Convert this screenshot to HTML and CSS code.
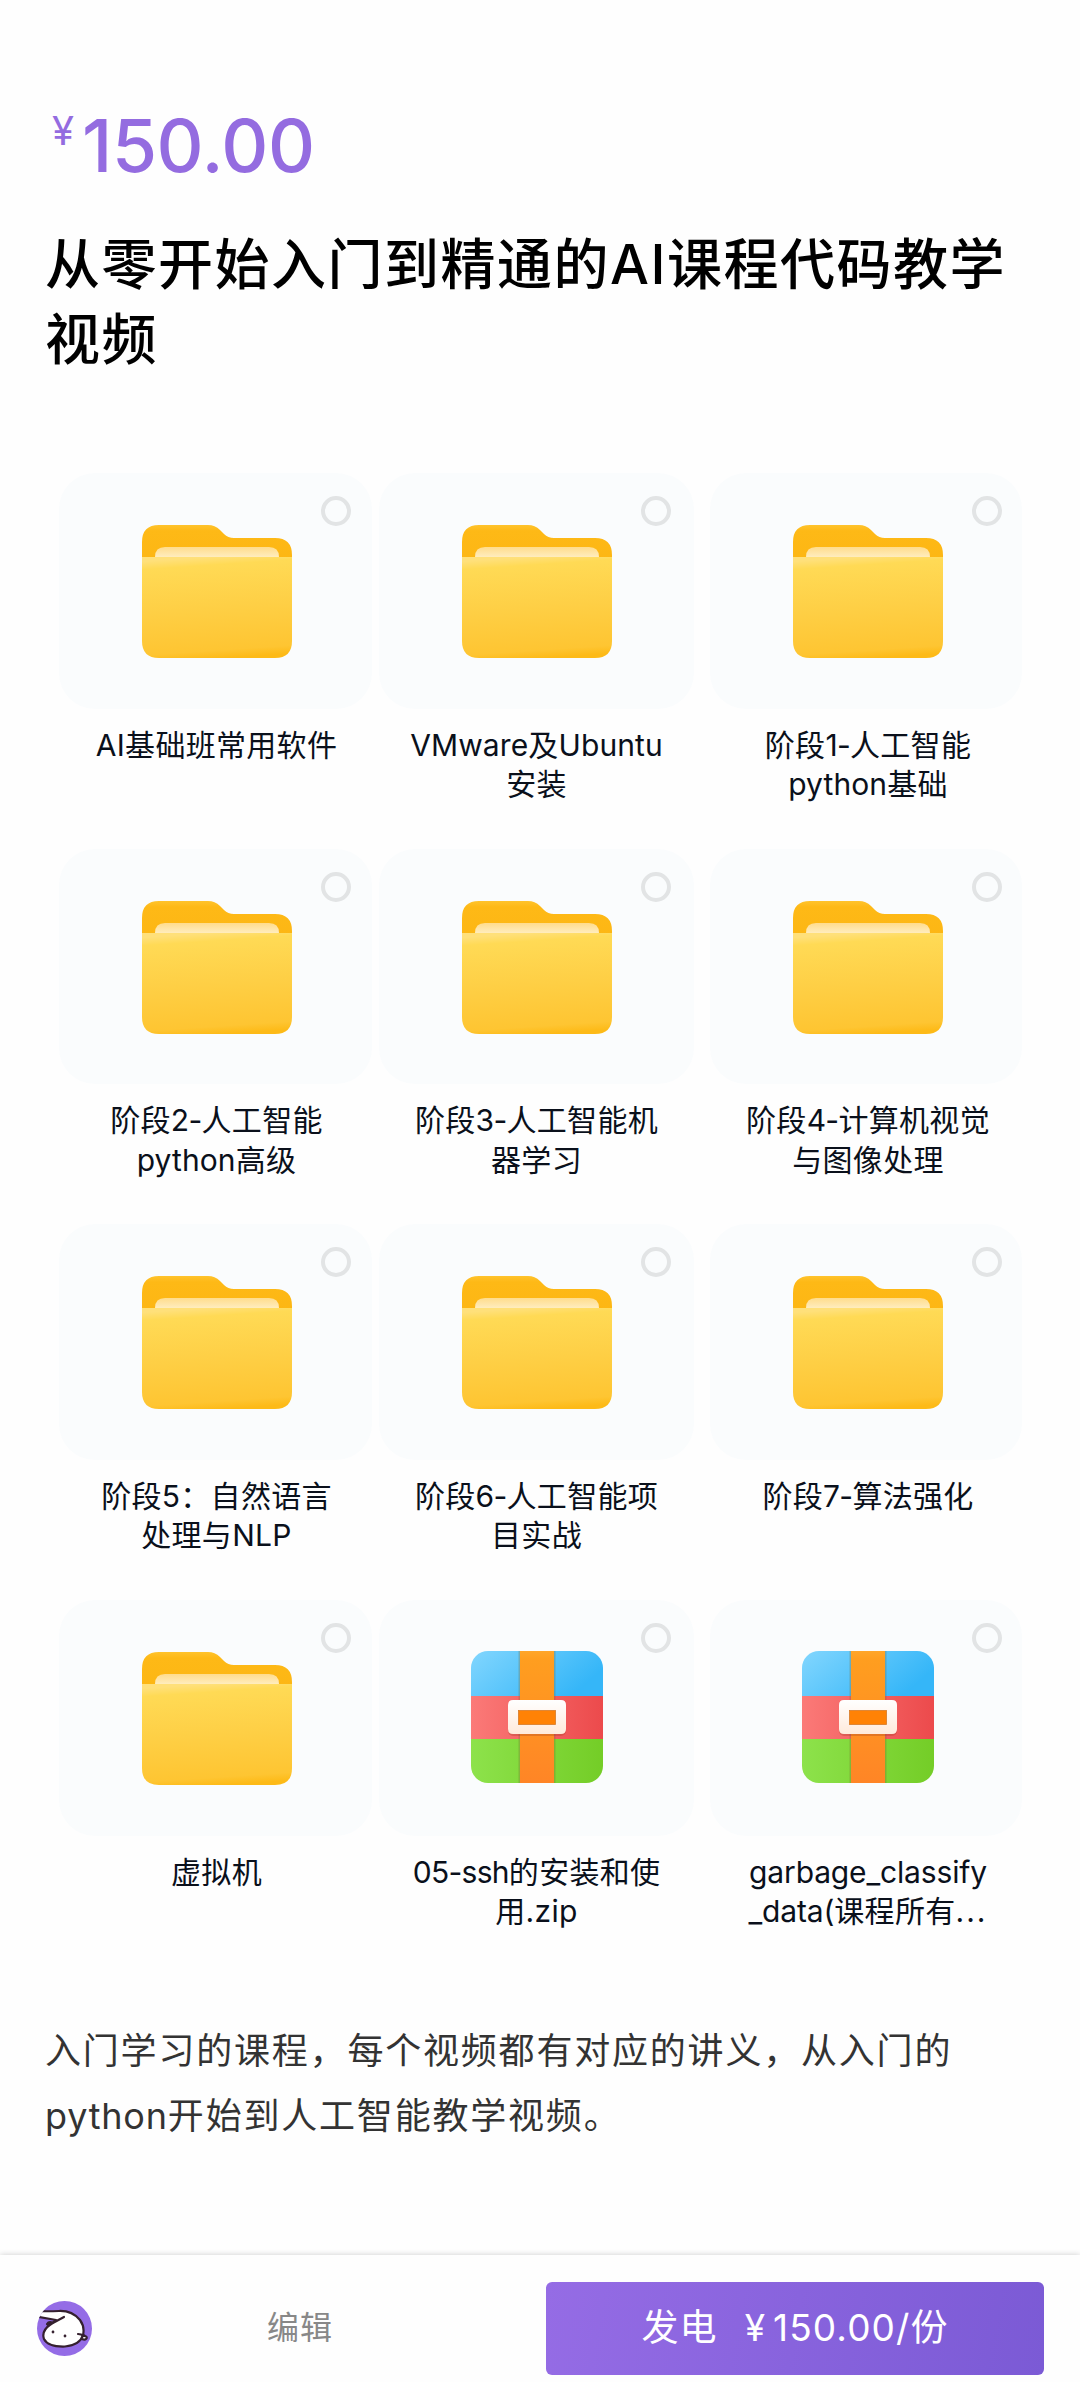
FILE: index.html
```html
<!DOCTYPE html>
<html lang="zh-CN">
<head>
<meta charset="utf-8">
<title>从零开始入门到精通的AI课程代码教学视频</title>
<link rel="stylesheet" href="styles.css">
</head>
<body>
<svg class="defs" width="0" height="0" aria-hidden="true">
  <defs>
    <linearGradient id="back" x1="0" y1="0" x2="0" y2="1"><stop offset="0" stop-color="#ffc32c"/><stop offset=".12" stop-color="#feb916"/><stop offset="1" stop-color="#fcb513"/></linearGradient>
    <linearGradient id="paper" x1="0" y1="0" x2="0" y2="1"><stop offset="0" stop-color="#ffdc8c"/><stop offset="1" stop-color="#fff0c8"/></linearGradient>
    <linearGradient id="front" x1=".45" y1="0" x2=".55" y2="1"><stop offset="0" stop-color="#ffe07a"/><stop offset=".08" stop-color="#ffda55"/><stop offset=".5" stop-color="#fecf45"/><stop offset=".92" stop-color="#fec532"/><stop offset="1" stop-color="#fdba17"/></linearGradient>
    <linearGradient id="blue" x1="0" y1="0" x2="1" y2=".4"><stop offset="0" stop-color="#82d6fe"/><stop offset="1" stop-color="#35b6f8"/></linearGradient>
    <linearGradient id="red"><stop offset="0" stop-color="#fb7a78"/><stop offset="1" stop-color="#ec4a4c"/></linearGradient>
    <linearGradient id="green"><stop offset="0" stop-color="#8de24b"/><stop offset="1" stop-color="#74cd27"/></linearGradient>
    <linearGradient id="strap" x1="0" y1="0" x2="0" y2="1"><stop offset="0" stop-color="#ffa629"/><stop offset=".06" stop-color="#ff9e1f"/><stop offset="1" stop-color="#ff8526"/></linearGradient>
    <linearGradient id="buckle" x1="0" y1="0" x2="0" y2="1"><stop offset="0" stop-color="#fff"/><stop offset="1" stop-color="#ffeadb"/></linearGradient>
    <clipPath id="zipClip"><rect width="132" height="132" rx="17"/></clipPath>
    <clipPath id="avatarClip"><circle cx="27.5" cy="27.5" r="27.5"/></clipPath>
    <symbol id="folder" viewBox="0 0 150 133">
      <path d="M0 50V17Q0 0 17 0H66Q73 0 78 5L82 9Q86 13 92 13H133Q150 13 150 30V50Z" fill="url(#back)"/>
      <path d="M13 34V32Q13 22 23 22H127Q137 22 137 32V34Z" fill="url(#paper)"/>
      <path d="M0 32H150V116Q150 133 133 133H17Q0 133 0 116Z" fill="url(#front)"/>
    </symbol>
    <symbol id="zip" viewBox="0 0 132 132">
      <g clip-path="url(#zipClip)">
        <rect width="132" height="45" fill="url(#blue)"/>
        <rect y="45" width="132" height="43" fill="url(#red)"/>
        <rect y="88" width="132" height="44" fill="url(#green)"/>
        <rect x="47.500" width="37" height="132" fill="#776633" opacity=".3"/>
        <rect x="49" width="34" height="132" fill="url(#strap)"/>
      </g>
      <rect x="37" y="50" width="58" height="35" rx="5" fill="#a33d22" opacity=".3"/>
      <path d="M42 49H90Q95 49 95 54V78Q95 83 90 83H42Q37 83 37 78V54Q37 49 42 49Z" fill="url(#buckle)"/>
      <rect x="47.500" y="59.500" width="37" height="14" fill="#ff8205" stroke="#d67b27" stroke-width=".8"/>
    </symbol>
  </defs>
</svg>

<main class="page">
  <div class="price"><span class="price-sign">¥</span><span class="price-value">150.00</span></div>
  <h1 class="title">从零开始入门到精通的AI课程代码教学视频</h1>

  <ul class="files">
    <li class="file"><div class="tile"><svg class="folder"><use href="#folder"/></svg><i class="pick"></i></div><p class="name">AI基础班常用软件</p></li>
    <li class="file"><div class="tile"><svg class="folder"><use href="#folder"/></svg><i class="pick"></i></div><p class="name"><span class="wide">VMware</span>及<span class="wide">Ubuntu</span><br>安装</p></li>
    <li class="file"><div class="tile"><svg class="folder"><use href="#folder"/></svg><i class="pick"></i></div><p class="name">阶段<span class="tight">1-</span>人工智能<br><span class="wide">python</span>基础</p></li>

    <li class="file"><div class="tile"><svg class="folder"><use href="#folder"/></svg><i class="pick"></i></div><p class="name">阶段<span class="tight">2-</span>人工智能<br><span class="wide">python</span>高级</p></li>
    <li class="file"><div class="tile"><svg class="folder"><use href="#folder"/></svg><i class="pick"></i></div><p class="name">阶段<span class="tight">3-</span>人工智能机<br>器学习</p></li>
    <li class="file"><div class="tile"><svg class="folder"><use href="#folder"/></svg><i class="pick"></i></div><p class="name">阶段<span class="tight">4-</span>计算机视觉<br>与图像处理</p></li>

    <li class="file"><div class="tile"><svg class="folder"><use href="#folder"/></svg><i class="pick"></i></div><p class="name">阶段5：自然语言<br>处理与NLP</p></li>
    <li class="file"><div class="tile"><svg class="folder"><use href="#folder"/></svg><i class="pick"></i></div><p class="name">阶段<span class="tight">6-</span>人工智能项<br>目实战</p></li>
    <li class="file"><div class="tile"><svg class="folder"><use href="#folder"/></svg><i class="pick"></i></div><p class="name">阶段<span class="tight">7-</span>算法强化</p></li>

    <li class="file"><div class="tile"><svg class="folder"><use href="#folder"/></svg><i class="pick"></i></div><p class="name">虚拟机</p></li>
    <li class="file"><div class="tile"><svg class="zip"><use href="#zip"/></svg><i class="pick"></i></div><p class="name"><span class="tight">05-ssh</span>的安装和使<br>用.zip</p></li>
    <li class="file"><div class="tile"><svg class="zip"><use href="#zip"/></svg><i class="pick"></i></div><p class="name"><span class="long">garbage_classify</span><br><span class="long">_data(</span>课程所有<span class="dots">...</span></p></li>
  </ul>

  <p class="intro">入门学习的课程，每个视频都有对应的讲义，从入门的<br><span class="word">python</span>开始到人工智能教学视频。</p>
</main>

<footer class="bar">
  <svg class="avatar" viewBox="0 0 55 55">
    <circle cx="27.500" cy="27.500" r="27.500" fill="#946ce6"/>
    <g clip-path="url(#avatarClip)" stroke="#35202f" stroke-width="2.200" stroke-linecap="round" stroke-linejoin="round">
      <path d="M10 23Q12 20 16 22L14 26Z" fill="#35202f"/>
      <path d="M41 33Q44 32 48 35Q51 36 49 38Q47 40 41 36" fill="#fff"/>
      <path d="M-3 10Q10 10.500 22 10Q35 9.500 43 19Q48 26 46 34Q43 44 28 45.500Q11 46 7 38Q4 30 14 23L19 19L-3 15Z" fill="#fff"/>
      <path d="M14 23L27 16M41 33Q44 33 47 35" fill="none"/>
      <circle cx="16" cy="31" r=".6" fill="#35202f" stroke-width="1.600"/>
      <circle cx="28" cy="35" r=".6" fill="#35202f" stroke-width="1.600"/>
    </g>
  </svg>
  <a class="edit">编辑</a>
  <button class="buy"><span>发电</span><span class="buy-sign">¥</span><span>150.00/</span><span>份</span></button>
</footer>
</body>
</html>
```
FILE: styles.css
```css
* { box-sizing: border-box; margin: 0; padding: 0; }

body {
  width: 1080px;
  height: 2382px;
  display: flex;
  flex-direction: column;
  background: #fefefe;
  color: #000;
  font-family: Inter, "Noto Sans CJK SC", sans-serif;
  overflow: hidden;
}

.defs { position: absolute; }

.page { flex: 1; padding: 100px 45px 0; }

/* Price and title */
.price {
  display: flex;
  align-items: flex-start;
  height: 91px;
  padding-left: 7px;
  color: #946ce0;
}
.price-sign { width: 30px; font-size: 40px; line-height: 61px; }
.price-value { font-size: 73px; line-height: 91px; font-weight: 500; letter-spacing: -.4px; }

.title {
  margin-top: 36px;
  font-size: 55px;
  font-weight: 500;
  line-height: 75px;
  letter-spacing: 1.500px;
}

/* File grid */
.files {
  display: grid;
  grid-template-columns: 320px 331px 312px;
  grid-auto-rows: 375.700px;
  margin: 96px 0 0 14px;
  list-style: none;
}
.file { width: 313px; }
.file:nth-child(3n+2) { width: 315px; }
.file:nth-child(3n) { width: 312px; }

.tile {
  position: relative;
  height: 235.500px;
  padding: 52px 0 0 83px;
  border-radius: 36px;
  background: #fafcfd;
}
.folder { display: block; width: 150px; height: 133px; }
.zip { display: block; width: 132px; height: 132px; margin: -1px 0 0 9px; }
.pick {
  position: absolute;
  top: 23px;
  left: 262px;
  width: 30px;
  height: 30px;
  border: 4px solid #e2e4e5;
  border-radius: 50%;
}

.name {
  width: 315px;
  margin-top: 17px;
  color: #0a101b;
  font-size: 30px;
  line-height: 39.500px;
  letter-spacing: .3px;
  text-align: center;
  white-space: nowrap;
}
.file:nth-child(3n) .name { width: 316px; }
.wide { letter-spacing: .1px; }
.tight { letter-spacing: -.7px; }
.long { letter-spacing: -.15px; }
.dots { letter-spacing: 2px; }

.intro {
  margin-top: 43px;
  color: #333;
  font-size: 36px;
  line-height: 65px;
  letter-spacing: 1.800px;
  white-space: nowrap;
}
.word { letter-spacing: .8px; }

/* Bottom bar */
.bar {
  display: flex;
  align-items: flex-start;
  height: 127px;
  padding: 27px 36px 0;
  background: #fefefe;
  box-shadow: 0 0 6px rgba(0, 0, 0, .2);
}
.avatar { width: 55px; height: 55px; margin: 19px 0 0 1px; }
.edit {
  width: 64px;
  margin-left: 175px;
  color: #888;
  font-size: 32px;
  line-height: 92px;
  letter-spacing: 1px;
  white-space: nowrap;
}
.buy {
  display: flex;
  justify-content: center;
  width: 498px;
  height: 93px;
  margin-left: 215px;
  border: 0;
  border-radius: 6px;
  background: linear-gradient(100deg, #956ce5, #7b5ad5);
  color: #fff;
  font: 37px/92px Inter, "Noto Sans CJK SC", sans-serif;
  letter-spacing: 1.100px;
}
.buy-sign { margin: 0 7px 0 27px; }
```
